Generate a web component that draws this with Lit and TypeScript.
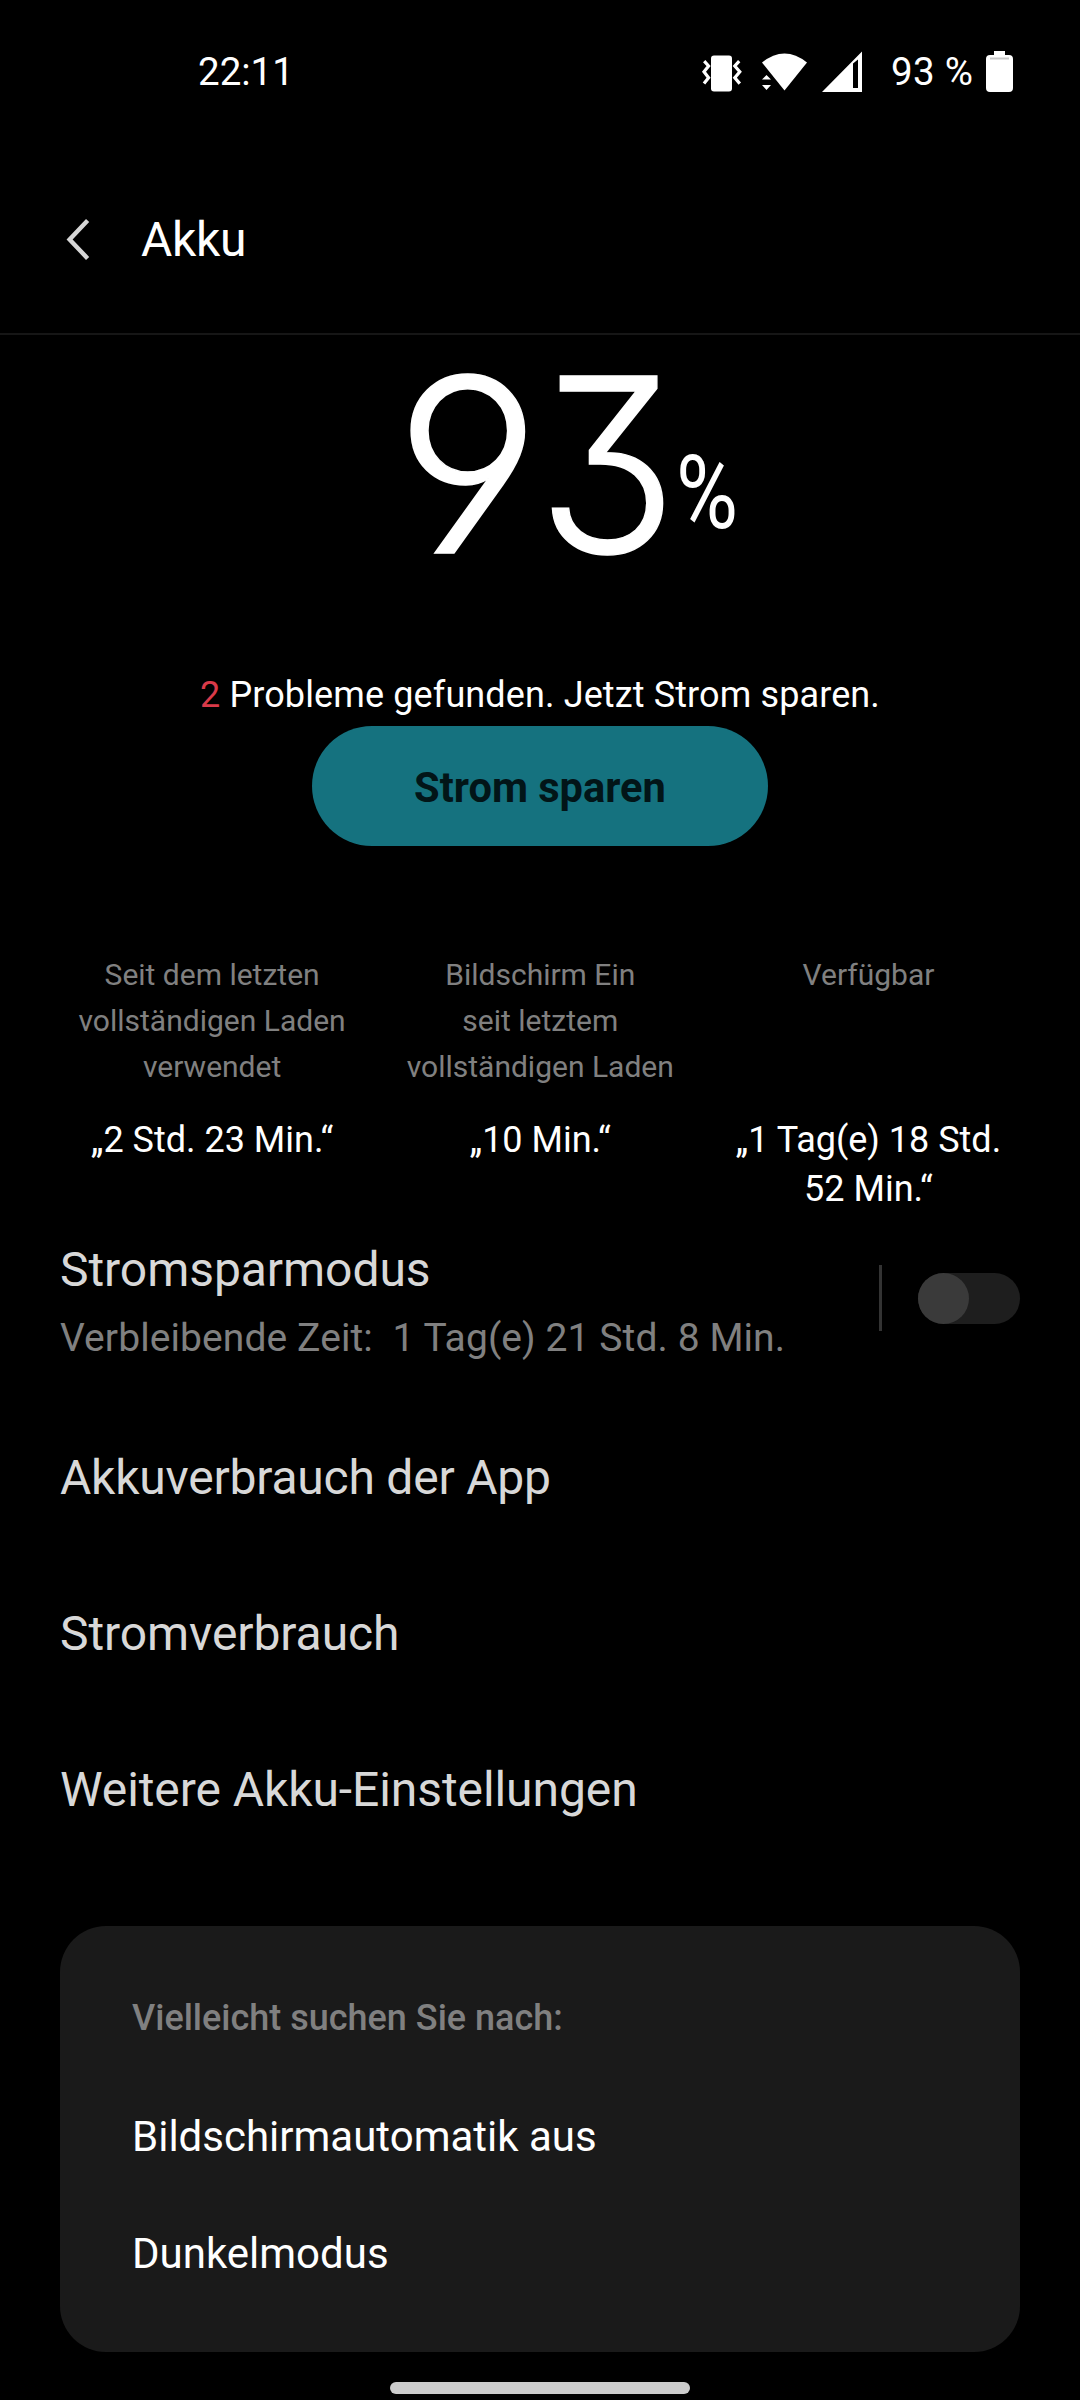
import { LitElement, html, css, svg } from "lit";
import { customElement, property } from "lit/decorators.js";

const statusIcons = {
  vibrate: svg`
    <rect x="10" y="6.5" width="21" height="36" rx="3" fill="#fff"/>
    <path d="M3.2 12.2 L7.6 17 L3 22.8 L7.6 28.8 L3 34.6 M38.2 12.2 L33.8 17 L38.8 22.8 L33.8 28.8 L38.8 34.6" fill="none" stroke="#fff" stroke-width="3.2"/>`,
};

@customElement("status-bar")
class StatusBar extends LitElement {
  static styles = css`
    :host { display: flex; height: 144px; box-sizing: border-box; padding: 49px 66px 0 198px; align-items: flex-start; color: #fff; font-size: 38.5px; line-height: 46px; }
    .time { flex: 1; }
    .icons { display: flex; align-items: flex-start; }
    svg { display: block; }
    .pct { margin: 0 12px 0 9px; width: 82px; white-space: nowrap; letter-spacing: 0.3px; }
  `;
  render() {
    return html`
      <span class="time">22:11</span>
      <span class="icons">
        <svg width="60" height="46" viewBox="0 0 60 46">${statusIcons.vibrate}</svg>
        <svg width="60" height="46" viewBox="0 0 60 46">
          <path d="M1 13.5 Q23.5 -4.5 46 13.5 L23.5 41.5 Z" fill="#fff"/>
          <path d="M1 30.6 L5.5 26 L10 30.6 Z M1 36 L10 36 L5.5 41 Z" fill="#fff"/>
        </svg>
        <svg width="61" height="46" viewBox="0 0 61 46">
          <path fill-rule="evenodd" d="M1 43 L41 43 L41 2.5 Z M32 14.5 L37 10.5 L37 39 L32 39 Z" fill="#fff"/>
        </svg>
        <span class="pct">93 %</span>
        <svg width="29" height="46" viewBox="0 0 29 46">
          <path d="M9 2 H20 V6 H24 Q28 6 28 10 V39 Q28 43 24 43 H5 Q1 43 1 39 V10 Q1 6 5 6 H9 Z" fill="#fff"/>
          <path d="M5 9.5 H24" stroke="#c8c8c8" stroke-width="2"/>
        </svg>
      </span>`;
  }
}

@customElement("battery-stat")
class BatteryStat extends LitElement {
  @property({ attribute: false }) label: string[] = [];
  @property({ attribute: false }) value: string[] = [];
  static styles = css`
    :host { display: block; width: 328.2px; text-align: center; }
    .label { height: 138px; font-size: 30px; line-height: 46px; color: #808080; }
    .value { margin-top: 26px; font-size: 36px; line-height: 49px; color: #fff; white-space: nowrap; }
  `;
  render() {
    return html`
      <div class="label">${this.label.map((l) => html`<div>${l}</div>`)}</div>
      <div class="value">${this.value.map((l) => html`<div>${l}</div>`)}</div>`;
  }
}

@customElement("app-root")
class AppRoot extends LitElement {
  static styles = css`
    :host { display: flex; flex-direction: column; width: 1080px; height: 2400px; overflow: hidden; background: #000; color: #fff; font-family: Roboto, "Liberation Sans", sans-serif; }
    .header { display: flex; height: 191px; box-sizing: border-box; padding: 66px 0 0 66px; border-bottom: 2px solid #161616; }
    .back { display: block; margin-top: 7px; }
    .title { margin-left: 48px; font-size: 48px; line-height: 60px; letter-spacing: -0.3px; }
    .level { display: flex; height: 295px; padding-left: 395px; }
    .digits { width: 281px; font-family: Inter, "Liberation Sans", sans-serif; font-weight: 300; font-size: 243px; line-height: 260px; letter-spacing: -18px; font-feature-settings: "cv04", "cv09"; white-space: nowrap; -webkit-text-stroke: 1.4px #fff; }
    .digit { display: inline-block; transform-origin: left; }
    .tens { margin-right: 20px; transform: scaleX(1.04); }
    .ones { transform: scaleX(0.95); }
    .unit { width: 73px; padding-top: 98px; font-size: 102px; line-height: 120px; transform: scaleX(0.83); transform-origin: left; }
    .advice { margin-top: 38px; text-align: center; font-size: 36px; line-height: 54px; letter-spacing: 0.12px; }
    .count { color: #d93a49; }
    .save { display: block; width: 456px; height: 120px; margin: 4px auto 0; padding: 3px 0 0; border: 0; border-radius: 60px; background: #15727f; color: #021518; font: 700 41.6px/46px Roboto, sans-serif; }
    .stats { display: flex; margin: 106px 47px 0 48px; height: 256px; }
    .mode { display: flex; padding: 0 60px; height: 160px; margin-top: 32px; }
    .modetext { flex: 1; }
    .name { font-size: 48px; line-height: 60px; color: #d8d8d8; letter-spacing: -0.06px; }
    .sub { margin-top: 8px; font-size: 39px; line-height: 60px; color: #808080; white-space: pre; letter-spacing: 0.09px; }
    .sep { width: 3px; height: 66px; margin-top: 25px; background: #333; }
    .switch { width: 102px; height: 51px; margin: 33px 0 0 36px; border-radius: 26px; background: #1e1e1e; }
    .thumb { width: 51px; height: 51px; border-radius: 50%; background: #3a3a3a; }
    .row { height: 156px; padding: 0 60px; font-size: 48px; line-height: 156px; color: #d8d8d8; letter-spacing: -0.08px; }
    .row.tight { letter-spacing: -0.22px; }
    .card { margin: 58px 60px 0; height: 426px; box-sizing: border-box; padding: 62px 72px 0; border-radius: 46px; background: #1a1a1a; }
    .hint { margin-bottom: 30px; font-size: 36px; line-height: 60px; font-weight: 500; color: #808080; }
    .link { font-size: 42px; line-height: 117px; }
    .pill { width: 300px; height: 12px; margin: 30px auto 0; border-radius: 6px; background: #ccc; }
  `;
  render() {
    return html`
      <status-bar></status-bar>
      <div class="header">
        <svg class="back" width="27" height="44" viewBox="0 0 27 44"><path d="M21.6 3.6 L3.6 22.5 L21.6 41.4" fill="none" stroke="#d6d6d6" stroke-width="4.4"/></svg>
        <div class="title">Akku</div>
      </div>
      <div class="level"><div class="digits"><span class="digit tens">9</span><span class="digit ones">3</span></div><div class="unit">%</div></div>
      <div class="advice"><span class="count">2</span> Probleme gefunden. Jetzt Strom sparen.</div>
      <button class="save">Strom sparen</button>
      <div class="stats">
        <battery-stat .label=${["Seit dem letzten", "vollständigen Laden", "verwendet"]} .value=${["„2 Std. 23 Min.“"]}></battery-stat>
        <battery-stat .label=${["Bildschirm Ein", "seit letztem", "vollständigen Laden"]} .value=${["„10 Min.“"]}></battery-stat>
        <battery-stat .label=${["Verfügbar"]} .value=${["„1 Tag(e) 18 Std.", "52 Min.“"]}></battery-stat>
      </div>
      <div class="mode">
        <div class="modetext">
          <div class="name">Stromsparmodus</div>
          <div class="sub">Verbleibende Zeit:  1 Tag(e) 21 Std. 8 Min.</div>
        </div>
        <div class="sep"></div>
        <div class="switch"><div class="thumb"></div></div>
      </div>
      <div class="row tight">Akkuverbrauch der App</div>
      <div class="row">Stromverbrauch</div>
      <div class="row">Weitere Akku-Einstellungen</div>
      <div class="card">
        <div class="hint">Vielleicht suchen Sie nach:</div>
        ${["Bildschirmautomatik aus", "Dunkelmodus"].map((t) => html`<div class="link">${t}</div>`)}
      </div>
      <div class="pill"></div>`;
  }
}
